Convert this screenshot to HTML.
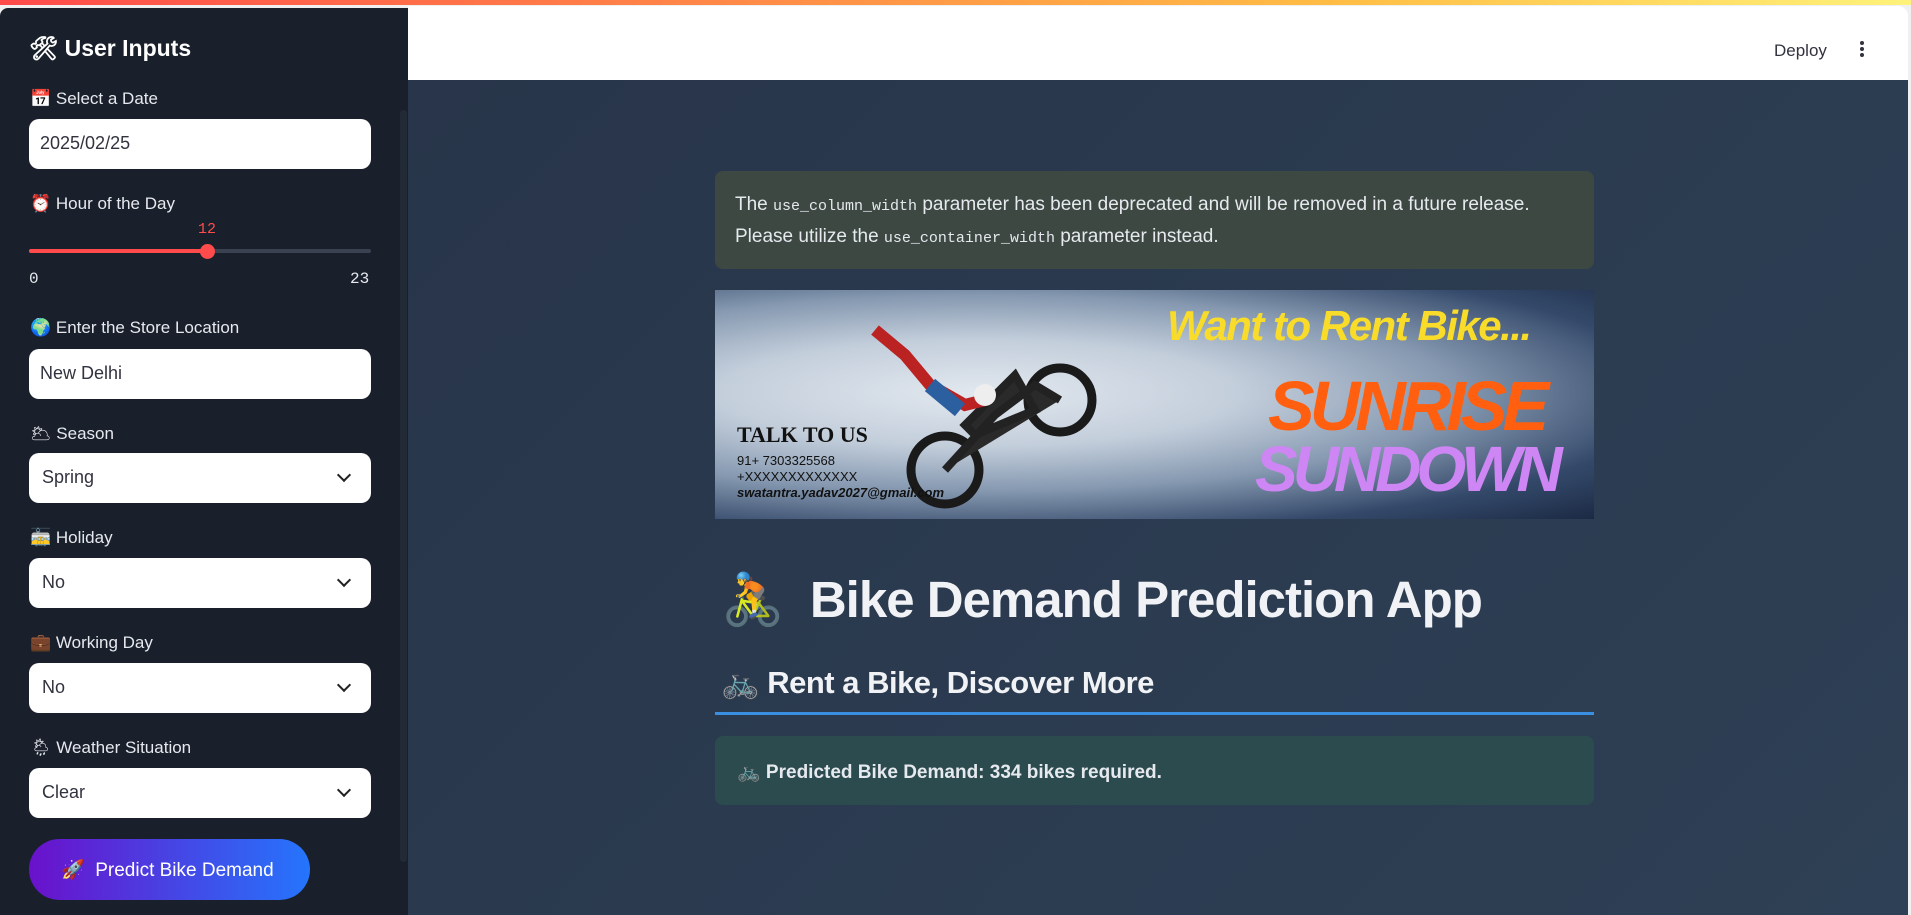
<!DOCTYPE html>
<html><head><meta charset="utf-8"><style>
*{box-sizing:border-box;margin:0;padding:0}
body{width:1911px;height:915px;overflow:hidden;background:#f0f0f0;font-family:"Liberation Sans","Noto Sans CJK SC",sans-serif;position:relative}
.topbar{position:absolute;left:0;top:0;width:1911px;height:5px;background:linear-gradient(90deg,#ff4b4b,#ffbd45 70%,#fff27a)}
.side{position:absolute;left:0;top:8px;width:408px;height:907px;background:#19202b;border-radius:8px 0 0 0}
.header{position:absolute;left:408px;top:6px;width:1500px;height:74px;background:#fff;border-radius:0 10px 0 0}
.main{position:absolute;left:408px;top:80px;width:1500px;height:835px;background:linear-gradient(135deg,#28354a,#2e4055)}
.abs{position:absolute}
.lbl{position:absolute;left:30px;color:#e6e9ee;font-size:17px}
.inp{position:absolute;left:29px;width:342px;height:50px;background:#fff;border-radius:10px;color:#31333f;font-size:18px;padding:14px 11px}
.sel::after{content:"";position:absolute;right:22px;top:17px;width:8px;height:8px;border-right:2.5px solid #222;border-bottom:2.5px solid #222;transform:rotate(45deg)}
.sel{padding-left:13px}
</style></head><body>
<div class="topbar"></div>
<div class="side">
 <div class="abs" style="left:29px;top:27px;color:#fff;font-size:23px;font-weight:bold">🛠 User Inputs</div>
 <div class="lbl" style="top:81px">📅 Select a Date</div>
 <div class="inp" style="top:111px">2025/02/25</div>
 <div class="lbl" style="top:186px">⏰ Hour of the Day</div>
 <div class="abs" style="left:198px;top:213px;color:#ff4b4b;font-family:'Liberation Mono',monospace;font-size:15px">12</div>
 <div class="abs" style="left:29px;top:241px;width:342px;height:4px;background:#3a4150;border-radius:2px"></div>
 <div class="abs" style="left:29px;top:241px;width:178px;height:4px;background:#ff4b4b;border-radius:2px"></div>
 <div class="abs" style="left:200px;top:236px;width:15px;height:15px;background:#ff4b4b;border-radius:50%"></div>
 <div class="abs" style="left:29px;top:262px;color:#e6e9ee;font-family:'Liberation Mono',monospace;font-size:16px">0</div>
 <div class="abs" style="left:350px;top:262px;color:#e6e9ee;font-family:'Liberation Mono',monospace;font-size:16px">23</div>
 <div class="lbl" style="top:310px">🌍 Enter the Store Location</div>
 <div class="inp" style="top:341px">New Delhi</div>
 <div class="lbl" style="top:416px">🌥 Season</div>
 <div class="inp sel" style="top:445px">Spring</div>
 <div class="lbl" style="top:520px">🚋 Holiday</div>
 <div class="inp sel" style="top:550px">No</div>
 <div class="lbl" style="top:625px">💼 Working Day</div>
 <div class="inp sel" style="top:655px">No</div>
 <div class="lbl" style="top:730px">🌦 Weather Situation</div>
 <div class="inp sel" style="top:760px">Clear</div>
 <div class="abs" style="left:29px;top:831px;width:281px;height:61px;border-radius:31px;background:linear-gradient(90deg,#6a11cb,#2575fc);color:#fff;font-size:19px;padding:19px 0 0 32px">🚀 &nbsp;Predict Bike Demand</div>
 <div class="abs" style="left:400px;top:102px;width:7px;height:752px;background:#222a36;border-radius:4px"></div>
</div>
<div class="header">
 <div class="abs" style="left:1366px;top:35px;font-size:17px;color:#31333f">Deploy</div>
 <div class="abs" style="left:1452px;top:35px;width:4px;height:4px;background:#31333f;border-radius:50%;box-shadow:0 6px 0 #31333f,0 12px 0 #31333f"></div>
</div>
<div class="main">
 <div class="abs" style="left:307px;top:91px;width:879px;height:98px;background:#3d4842;border-radius:8px;color:#e6e9ee;font-size:19px;line-height:30px;padding:19px 20px">The <span style="font-family:'Liberation Mono',monospace;font-size:15px">use_column_width</span> parameter has been deprecated and will be removed in a future release.<br>Please utilize the <span style="font-family:'Liberation Mono',monospace;font-size:15px">use_container_width</span> parameter instead.</div>
 <div class="abs" style="left:307px;top:210px;width:879px;height:229px;overflow:hidden;background:radial-gradient(ellipse at 30% 45%,#e2e8ef 0%,#c3cedb 30%,#8598b0 55%,#34496a 80%,#1b2a44)">
  <svg class="abs" style="left:120px;top:25px" width="300" height="200" viewBox="0 0 300 200">
   <circle cx="225" cy="85" r="32" fill="none" stroke="#1a1a1a" stroke-width="9"/>
   <circle cx="110" cy="155" r="34" fill="none" stroke="#1a1a1a" stroke-width="9"/>
   <path d="M110 155 L160 100 L200 70 L225 85 M140 120 L200 95 L180 60 L130 110 Z" fill="#2a2a2a" stroke="#222" stroke-width="8"/>
   <path d="M40 15 L70 40 L95 70 L130 90 L150 85" fill="none" stroke="#b22" stroke-width="12"/>
   <path d="M95 70 L125 95" stroke="#2b5fa0" stroke-width="16"/>
   <circle cx="150" cy="80" r="11" fill="#eee"/>
  </svg>
  <div class="abs" style="left:452px;top:12px;color:#f9dc2a;font-size:42px;font-weight:bold;font-style:italic;letter-spacing:-1.5px">Want to Rent Bike...</div>
  <div class="abs" style="left:553px;top:76px;color:#ff5f0f;font-size:70px;font-weight:bold;font-style:italic;letter-spacing:-5px">SUNRISE</div>
  <div class="abs" style="left:540px;top:142px;color:#cf86f5;font-size:64px;font-weight:bold;font-style:italic;letter-spacing:-5px">SUNDOWN</div>
  <div class="abs" style="left:22px;top:132px;color:#111;font-size:22px;font-weight:bold;font-family:'Liberation Serif',serif">TALK TO US</div>
  <div class="abs" style="left:22px;top:163px;color:#111;font-size:13px;line-height:16px">91+ 7303325568<br>+XXXXXXXXXXXXX<br><b><i>swatantra.yadav2027@gmail.com</i></b></div>
 </div>
 <div class="abs" style="left:313px;top:490px;color:#f0f2f6;font-size:51px;font-weight:bold;letter-spacing:-1px">🚴 &nbsp;Bike Demand Prediction App</div>
 <div class="abs" style="left:313px;top:584px;color:#f0f2f6;font-size:31px;font-weight:bold;letter-spacing:-0.5px">🚲 Rent a Bike, Discover More</div>
 <div class="abs" style="left:307px;top:632px;width:879px;height:3px;background:#3b8fe0"></div>
 <div class="abs" style="left:307px;top:656px;width:879px;height:69px;background:#2b4b4f;border-radius:8px;color:#e6e9ee;font-size:19px;font-weight:bold;padding:24px 22px">🚲 Predicted Bike Demand: 334 bikes required.</div>
</div>
</body></html>
